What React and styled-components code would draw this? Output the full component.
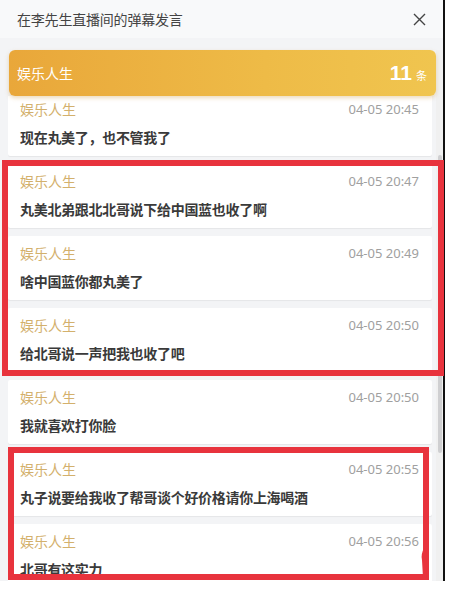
import React from "react";
import styled, { createGlobalStyle } from "styled-components";

const Global = createGlobalStyle`
  html, body { margin: 0; padding: 0; background: #fff; }
  body { font-family: "Noto Sans CJK SC", "Noto Sans", sans-serif; }
`;

const Page = styled.div`
  position: relative;
  width: 449px;
  height: 589px;
  background: #fff;
  overflow: hidden;
`;

const Panel = styled.div`
  width: 443px;
  height: 581px;
  border-right: 2px solid #111;
  background: #f3f4f6;
  display: flex;
  flex-direction: column;
`;

const Header = styled.div`
  height: 38px;
  flex: none;
  background: #f8f9fa;
  display: flex;
  align-items: center;
  justify-content: space-between;
  padding: 0 17px 0 17px;
  box-sizing: border-box;
`;

const Title = styled.div`
  font-size: 14px;
  color: #444;
  letter-spacing: -0.2px;
`;

const Close = styled.svg`
  width: 13px;
  height: 13px;
  margin-right: 0px;
`;

const Body = styled.div`
  flex: 1;
  min-height: 0;
  display: flex;
  padding-top: 12px;
`;

const Column = styled.div`
  flex: 1;
  min-width: 0;
  display: flex;
  flex-direction: column;
  padding-left: 9px;
`;

const Banner = styled.div`
  flex: none;
  height: 46px;
  border-radius: 6px;
  background: linear-gradient(90deg, #e9a73a 0%, #eebb47 60%, #f0c54f 100%);
  box-shadow: 0 2px 4px rgba(200, 150, 60, 0.35);
  display: flex;
  align-items: center;
  justify-content: space-between;
  padding: 0 9px 0 8px;
  position: relative;
  z-index: 2;
  margin-right: 0;
`;

const BannerName = styled.span`
  color: #fff;
  font-size: 14px;
`;

const Count = styled.span`
  color: #fff;
  font-size: 21px;
  font-weight: 700;
  display: flex;
  align-items: baseline;
  gap: 4px;
  font-family: "Liberation Sans", "Noto Sans", sans-serif;
`;

const CountUnit = styled.span`
  font-size: 11px;
  font-weight: 400;
  font-family: "Noto Sans CJK SC", sans-serif;
`;

const Viewport = styled.div`
  flex: 1;
  min-height: 0;
  overflow: hidden;
  margin-left: -1px;
  margin-right: 4px;
`;

const List = styled.div`
  display: flex;
  flex-direction: column;
  gap: 8px;
  margin-top: -4px;
`;

const Card = styled.div`
  height: 64px;
  flex: none;
  background: #fff;
  border-radius: 2px;
  box-shadow: 0 1px 1px rgba(0, 0, 0, 0.06);
  box-sizing: border-box;
  padding: 8px 13px 0 12px;
`;

const Meta = styled.div`
  height: 18px;
  display: flex;
  align-items: center;
  justify-content: space-between;
`;

const Name = styled.span`
  color: #d3b06c;
  font-size: 14px;
`;

const Time = styled.span`
  color: #a0a0a0;
  font-size: 13px;
  font-family: "Noto Sans", "Liberation Sans", sans-serif;
`;

const Message = styled.div`
  margin-top: 9px;
  line-height: 20px;
  font-size: 14px;
  font-weight: 700;
  color: #3a3a3a;
  letter-spacing: -0.3px;
`;

const Scrollbar = styled.div`
  width: 7px;
  flex: none;
  background: #f0f0f0;
  position: relative;
`;

const Thumb = styled.div`
  position: absolute;
  left: 2px;
  width: 4px;
  top: 105px;
  height: 298px;
  background: #cfcfd1;
  border-radius: 2px;
`;

const Highlight = styled.div`
  position: absolute;
  box-sizing: border-box;
  border: 6px solid #e8333d;
  pointer-events: none;
  z-index: 5;
`;

const Mark = styled.svg`
  position: absolute;
  left: 420px;
  top: 546px;
  z-index: 6;
`;

const items = [
  { time: "04-05 20:45", text: "现在丸美了，也不管我了" },
  { time: "04-05 20:47", text: "丸美北弟跟北北哥说下给中国蓝也收了啊" },
  { time: "04-05 20:49", text: "啥中国蓝你都丸美了" },
  { time: "04-05 20:50", text: "给北哥说一声把我也收了吧" },
  { time: "04-05 20:50", text: "我就喜欢打你脸" },
  { time: "04-05 20:55", text: "丸子说要给我收了帮哥谈个好价格请你上海喝酒" },
  { time: "04-05 20:56", text: "北哥有这实力" },
];

export default function App() {
  return (
    <Page>
      <Global />
      <Panel>
        <Header>
          <Title>在李先生直播间的弹幕发言</Title>
          <Close viewBox="0 0 13 13">
            <path d="M1 1 L12 12 M12 1 L1 12" stroke="#444" strokeWidth="1.4" fill="none" />
          </Close>
        </Header>
        <Body>
          <Column>
            <Banner>
              <BannerName>娱乐人生</BannerName>
              <Count>
                11<CountUnit>条</CountUnit>
              </Count>
            </Banner>
            <Viewport>
              <List>
                {items.map((it, i) => (
                  <Card key={i}>
                    <Meta>
                      <Name>娱乐人生</Name>
                      <Time>{it.time}</Time>
                    </Meta>
                    <Message>{it.text}</Message>
                  </Card>
                ))}
              </List>
            </Viewport>
          </Column>
          <Scrollbar>
            <Thumb />
          </Scrollbar>
        </Body>
      </Panel>
      <Highlight style={{ left: 2, top: 160, width: 442, height: 216 }} />
      <Highlight style={{ left: 8, top: 447, width: 421, height: 133 }} />
      <Mark width="10" height="34" viewBox="0 0 10 34">
        <path d="M4 2 C6 5 7 8 6 12 L7 32 L3 32 L2 14 C1 10 2 6 4 2 Z" fill="#e8333d" />
      </Mark>
    </Page>
  );
}
